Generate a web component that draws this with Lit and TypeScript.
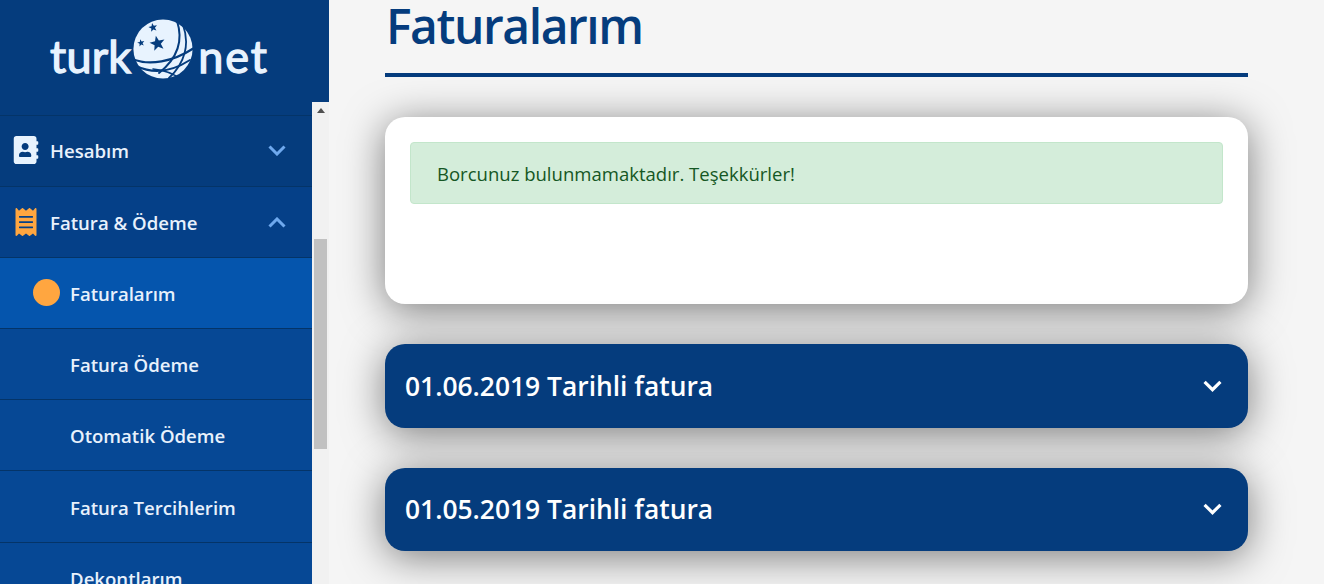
import { LitElement, css, html, svg } from "lit";
import { customElement } from "lit/decorators.js";

const addressBook = svg`<path d="M436 160c6.6 0 12-5.4 12-12v-40c0-6.6-5.4-12-12-12h-20V48c0-26.5-21.5-48-48-48H48C21.5 0 0 21.5 0 48v416c0 26.5 21.5 48 48 48h320c26.5 0 48-21.5 48-48v-48h20c6.6 0 12-5.4 12-12v-40c0-6.6-5.4-12-12-12h-20v-64h20c6.6 0 12-5.4 12-12v-40c0-6.6-5.4-12-12-12h-20v-64h20zm-228-32c35.3 0 64 28.7 64 64s-28.7 64-64 64-64-28.7-64-64 28.7-64 64-64zm112 236.8c0 10.6-10 19.2-22.4 19.2H118.4C106 384 96 375.4 96 364.8v-19.2c0-31.8 30.1-57.6 67.2-57.6h5c12.3 5.1 25.7 8 39.8 8s27.6-2.9 39.8-8h5c37.1 0 67.2 25.8 67.2 57.6v19.2z"/>`;
const receipt = svg`<path d="M358.4 3.2L320 48 265.6 3.2a15.9 15.9 0 0 0-19.2 0L192 48 137.6 3.2a15.9 15.9 0 0 0-19.2 0L64 48 25.6 3.2C15-4.7 0 2.8 0 16v480c0 13.2 15 20.7 25.6 12.8L64 464l54.4 44.8a15.9 15.9 0 0 0 19.2 0L192 464l54.4 44.8a15.9 15.9 0 0 0 19.2 0L320 464l38.4 44.8c10.5 7.9 25.6.4 25.6-12.8V16c0-13.2-15-20.7-25.6-12.8zM320 360c0 4.4-3.6 8-8 8H72c-4.4 0-8-3.6-8-8v-16c0-4.4 3.6-8 8-8h240c4.4 0 8 3.6 8 8v16zm0-96c0 4.4-3.6 8-8 8H72c-4.4 0-8-3.6-8-8v-16c0-4.4 3.6-8 8-8h240c4.4 0 8 3.6 8 8v16zm0-96c0 4.4-3.6 8-8 8H72c-4.4 0-8-3.6-8-8v-16c0-4.4 3.6-8 8-8h240c4.4 0 8 3.6 8 8v16z"/>`;

const star = (x: number, y: number, r: number, rot = -12) => {
  const pts: string[] = [];
  for (let i = 0; i < 10; i++) {
    const rad = i % 2 ? r * 0.42 : r;
    const a = ((rot + i * 36 - 90) * Math.PI) / 180;
    pts.push(`${(x + rad * Math.cos(a)).toFixed(2)},${(y + rad * Math.sin(a)).toFixed(2)}`);
  }
  return svg`<polygon points=${pts.join(" ")} fill="#053c7d" />`;
};

const globe = html`<svg class="globe" viewBox="0 0 60 60" aria-hidden="true">
  <circle cx="30" cy="30" r="29.6" fill="#e8f3fe" />
  ${star(20, 8.5, 4.6)} ${star(8, 24, 3.8)} ${star(24.5, 24.5, 8)}
  <g fill="none" stroke="#053c7d" stroke-linecap="round">
    <path d="M44 2C50 20 46 38 26 54" stroke-width="2" />
    <path d="M50 6C57 25 52 44 36 59" stroke-width="1.8" />
    <path d="M-1 40C16 47 40 43 61 29" stroke-width="2.2" />
    <path d="M3 47C22 56 40 52 57 41" stroke-width="2" />
    <path d="M20 50C30 51 40 54 47 60" stroke-width="1.6" />
  </g>
</svg>`;

const chevron = (up: boolean) =>
  html`<svg class="chev" viewBox="0 0 18 11" aria-hidden="true">
    <path d=${up ? "M1.5 9.5 9 2l7.5 7.5" : "M1.5 1.5 9 9l7.5-7.5"} />
  </svg>`;

@customElement("app-root")
export class AppRoot extends LitElement {
  static styles = css`
    :host {
      display: flex;
      height: 100vh;
      overflow: hidden;
      background: #f5f5f5;
      font-family: "Open Sans", "Noto Sans", sans-serif;
    }
    .sidebar {
      width: 329px;
      flex-shrink: 0;
      display: flex;
      flex-direction: column;
      background: #f5f5f5;
    }
    .brand {
      height: 102px;
      flex-shrink: 0;
      background: #053c7d;
      display: flex;
      justify-content: center;
      padding: 19px 10px 0 0;
      box-sizing: border-box;
    }
    .logo {
      display: flex;
      align-items: flex-start;
      height: 60px;
      color: #e8f3fe;
      font-family: "Lato", sans-serif;
      font-size: 45px;
      line-height: 60px;
      letter-spacing: 0.2px;
    }
    .logo span {
      padding-top: 7px;
      -webkit-text-stroke: 1.3px #e8f3fe;
    }
    .logo .net {
      letter-spacing: 1.9px;
    }
    .globe {
      width: 60px;
      height: 60px;
      margin: 0 5px 0 2px;
    }
    .scroller {
      flex: 1;
      display: flex;
      min-height: 0;
    }
    .menu {
      flex: 1;
      min-width: 0;
      overflow: hidden;
      background: #064895;
    }
    .stub {
      height: 12.5px;
      background: #053c7d;
      border-bottom: 1px solid #043468;
    }
    .row {
      height: 71.2px;
      box-sizing: border-box;
      display: flex;
      align-items: center;
      padding-top: 1px;
      border-bottom: 1px solid #043468;
      color: #e8f1fc;
      font-size: 18.6px;
      font-weight: 600;
    }
    .row.parent {
      padding-left: 13px;
      padding-right: 26px;
    }
    .row.sub {
      padding-left: 70px;
    }
    .row.closed {
      padding-top: 0;
      padding-bottom: 1px;
      background: #053c7d;
    }
    .row.open {
      background: #054088;
    }
    .row.active {
      background: #0555ad;
      position: relative;
    }
    .dot {
      position: absolute;
      left: 33px;
      top: 21px;
      width: 27px;
      height: 27px;
      border-radius: 50%;
      background: #ffa640;
    }
    .ico {
      height: 28px;
      width: 26px;
      flex-shrink: 0;
      margin-right: 11px;
    }
    .ico.book {
      fill: #e8f3fe;
    }
    .ico.bill {
      fill: #ffa640;
    }
    .row .label {
      flex: 1;
    }
    .chev {
      width: 18px;
      height: 11px;
      fill: none;
      stroke: #6fa9ee;
      stroke-width: 3;
    }
    .track {
      width: 17px;
      flex-shrink: 0;
      box-sizing: border-box;
      padding: 137px 2px 0;
      background: #f1f1f1;
      position: relative;
    }
    .arrow {
      position: absolute;
      left: 5px;
      top: 6px;
      width: 0;
      height: 0;
      border-left: 4px solid transparent;
      border-right: 4px solid transparent;
      border-bottom: 5px solid #505050;
    }
    .thumb {
      height: 210px;
      background: #c1c1c1;
    }
    main {
      flex: 1;
      min-width: 0;
      padding: 0 76px 0 56px;
    }
    h1 {
      margin: 0;
      height: 73px;
      border-bottom: 4px solid #053c7d;
      color: #053c7d;
      font-size: 48px;
      font-weight: 600;
      letter-spacing: -1.45px;
      line-height: 52px;
      padding-left: 1px;
    }
    .card {
      margin-top: 40px;
      height: 187px;
      box-sizing: border-box;
      padding: 25px;
      background: #fff;
      border-radius: 20px;
      box-shadow: 0 6px 40px rgba(0, 0, 0, 0.5);
    }
    .alert {
      height: 62px;
      box-sizing: border-box;
      display: flex;
      align-items: center;
      padding: 1px 26px 0;
      background: #d4edda;
      border: 1px solid #c3e6cb;
      border-radius: 4px;
      color: #155724;
      font-size: 18.55px;
    }
    .bill-head {
      margin-top: 40px;
      height: 83.5px;
      box-sizing: border-box;
      display: flex;
      align-items: center;
      justify-content: space-between;
      padding: 0 26px 0 20px;
      background: #053c7d;
      border-radius: 20px;
      box-shadow: 0 6px 40px rgba(0, 0, 0, 0.5);
      color: #fff;
      font-size: 26.4px;
      font-weight: 600;
    }
    .bill-head .chev {
      width: 19px;
      height: 12px;
      stroke: #fff;
      stroke-width: 3;
    }
  `;

  render() {
    return html`
      <aside class="sidebar">
        <div class="brand">
          <div class="logo"><span>turk</span>${globe}<span class="net">net</span></div>
        </div>
        <div class="scroller">
          <nav class="menu">
            <div class="stub"></div>
            <div class="row parent closed">
              <svg class="ico book" viewBox="0 0 448 512" aria-hidden="true">${addressBook}</svg>
              <span class="label">Hesabım</span>${chevron(false)}
            </div>
            <div class="row parent open">
              <svg class="ico bill" viewBox="0 0 384 512" aria-hidden="true">${receipt}</svg>
              <span class="label">Fatura &amp; Ödeme</span>${chevron(true)}
            </div>
            <div class="row sub active"><i class="dot"></i>Faturalarım</div>
            <div class="row sub">Fatura Ödeme</div>
            <div class="row sub">Otomatik Ödeme</div>
            <div class="row sub">Fatura Tercihlerim</div>
            <div class="row sub">Dekontlarım</div>
          </nav>
          <div class="track"><i class="arrow"></i><div class="thumb"></div></div>
        </div>
      </aside>
      <main>
        <h1>Faturalarım</h1>
        <section class="card">
          <div class="alert">Borcunuz bulunmamaktadır. Teşekkürler!</div>
        </section>
        <div class="bill-head"><span>01.06.2019 Tarihli fatura</span>${chevron(false)}</div>
        <div class="bill-head"><span>01.05.2019 Tarihli fatura</span>${chevron(false)}</div>
      </main>
    `;
  }
}

declare global {
  interface HTMLElementTagNameMap {
    "app-root": AppRoot;
  }
}
